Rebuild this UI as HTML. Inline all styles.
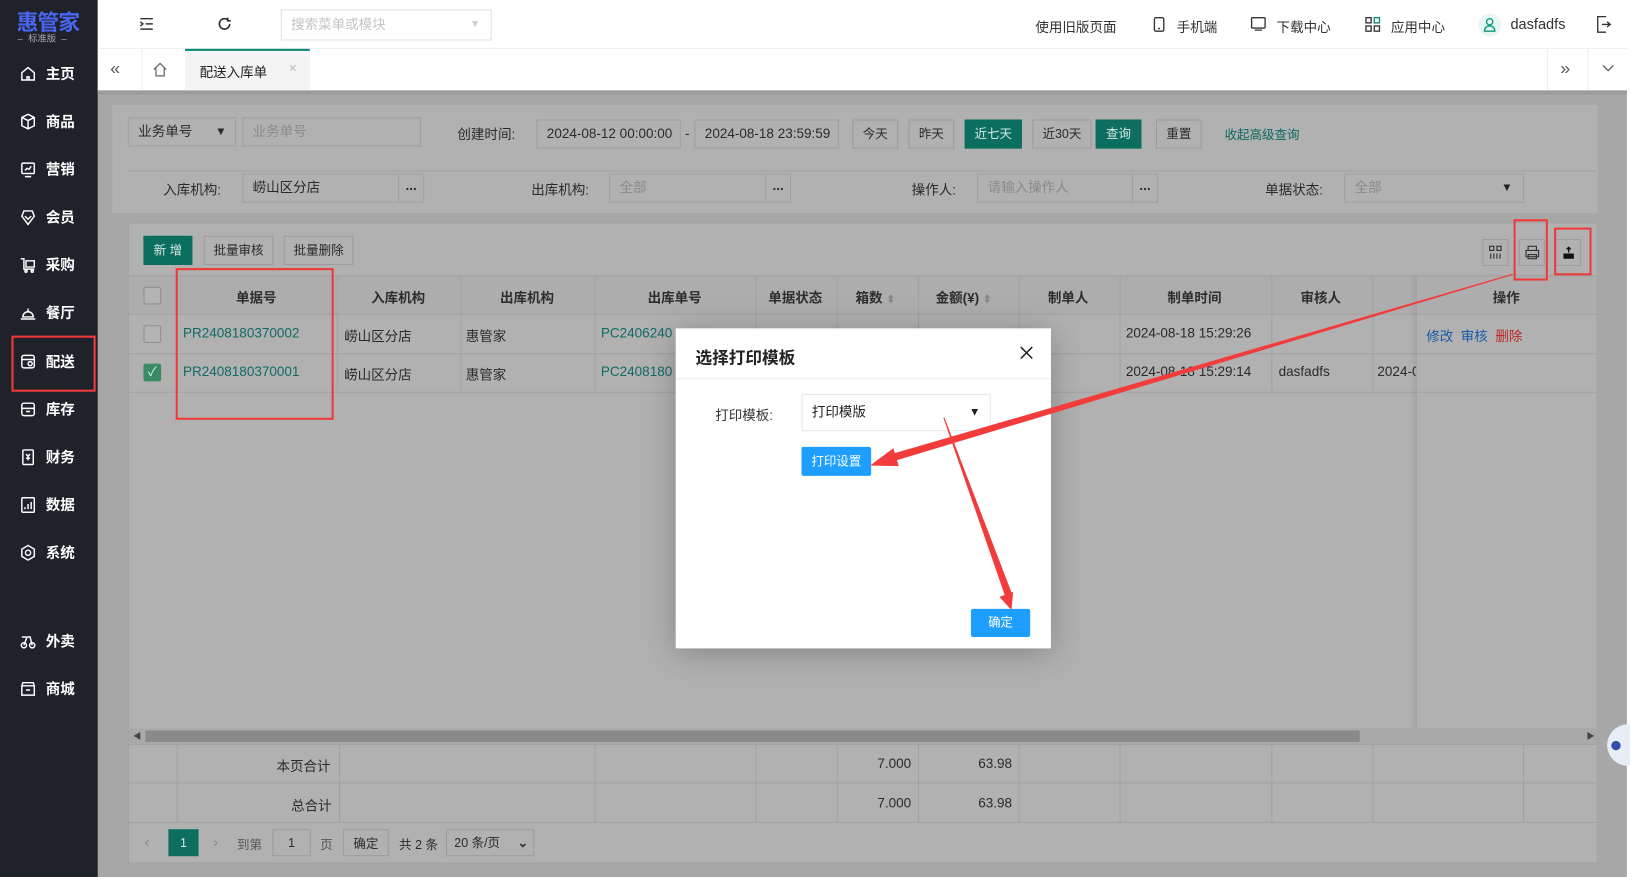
<!DOCTYPE html>
<html><head><meta charset="utf-8">
<style>
*{box-sizing:border-box;margin:0;padding:0}
body{width:1630px;height:877px;overflow:hidden;background:#a7a7a7;font-family:"Liberation Sans","Noto Sans CJK SC",sans-serif;font-size:13px;color:#2a2a2a}
#w{position:absolute;left:0;top:0;width:1568px;height:844px;transform:scale(1.03954,1.0391);transform-origin:0 0;background:#a7a7a7;overflow:hidden}
.a{position:absolute}
.side{left:0;top:0;width:94px;height:844px;background:#1f222b}
.mi{position:absolute;left:0;width:94px;height:30px;color:#fff;font-size:14px;font-weight:bold;line-height:30px}
.mi span{position:absolute;left:44px}
.mi svg{position:absolute;left:19px;top:7px}
.hdr{left:94px;top:0;width:1474px;height:47px;background:#fff;border-bottom:1px solid #eee}
.tabs{left:94px;top:47px;width:1474px;height:40px;background:#fff}
.box{position:absolute;border:1px solid #a0a0a0;background:#b1b1b1;height:28px;line-height:26px;padding-left:9px;color:#2a2a2a}
.ph{color:#8a8a8a}
.btn{position:absolute;border:1px solid #9c9c9c;background:#b1b1b1;height:28px;line-height:26px;text-align:center;font-size:12px;color:#2a2a2a}
.g{background:#0b6e5f;border-color:#0b6e5f;color:#d8e8e4}
.dots{position:absolute;top:0;right:0;width:24px;height:26px;border-left:1px solid #a0a0a0;text-align:center;font-weight:bold;line-height:22px}
.vl{position:absolute;width:1px;background:#a2a2a2}
.hl{position:absolute;height:1px;background:#a2a2a2}
.th{position:absolute;top:276px;font-weight:bold;color:#2e2e2e}
.td{position:absolute;color:#2a2a2a}
.gr{color:#0f6b5e}
.red{position:absolute;border:2px solid #f03a3a}
.cb{position:absolute;width:17px;height:17px;border:1px solid #8f8f8f;background:#b4b4b4;border-radius:2px}
</style></head><body><div id="w">

<div class="a side">
 <div class="a" style="left:16px;top:6px;color:#4966f0;font-size:21px;font-weight:bold;letter-spacing:-1px">惠管家</div>
 <div class="a" style="left:17px;top:30px;color:#aaa;font-size:9px">–&nbsp; 标准版 &nbsp;–</div>
 <div class="mi" style="top:56px"><svg width="16" height="16" viewBox="0 0 16 16" fill="none" stroke="#fff" stroke-width="1.4"><path d="M2 7L8 2l6 5v7H2z"/><path d="M7 14v-3h2v3"/></svg><span>主页</span></div>
 <div class="mi" style="top:102px"><svg width="16" height="16" viewBox="0 0 16 16" fill="none" stroke="#fff" stroke-width="1.4"><path d="M8 1l6 3v8l-6 3-6-3V4z M2 4l6 3 6-3 M8 7v8"/></svg><span>商品</span></div>
 <div class="mi" style="top:148px"><svg width="16" height="16" viewBox="0 0 16 16" fill="none" stroke="#fff" stroke-width="1.4"><rect x="2" y="2" width="12" height="10" rx="1"/><path d="M5 9l2-2 2 1 2-3 M5 15h6"/></svg><span>营销</span></div>
 <div class="mi" style="top:194px"><svg width="16" height="16" viewBox="0 0 16 16" fill="none" stroke="#fff" stroke-width="1.4"><path d="M8 15L2 7l2-5h8l2 5z M5 7l3 3 3-3"/></svg><span>会员</span></div>
 <div class="mi" style="top:240px"><svg width="16" height="16" viewBox="0 0 16 16" fill="none" stroke="#fff" stroke-width="1.4"><path d="M1 2h3v10h10 M6 4h8v6H6z"/><circle cx="6" cy="14" r="1"/><circle cx="12" cy="14" r="1"/></svg><span>采购</span></div>
 <div class="mi" style="top:286px"><svg width="16" height="16" viewBox="0 0 16 16" fill="none" stroke="#fff" stroke-width="1.4"><path d="M3 12a5 5 0 0110 0z M8 4v3 M1 14h14"/></svg><span>餐厅</span></div>
 <div class="mi" style="top:333px"><svg width="16" height="16" viewBox="0 0 16 16" fill="none" stroke="#fff" stroke-width="1.4"><rect x="2" y="2" width="12" height="12" rx="2"/><path d="M2 6h12"/><circle cx="10" cy="10" r="2"/></svg><span>配送</span></div>
 <div class="mi" style="top:379px"><svg width="16" height="16" viewBox="0 0 16 16" fill="none" stroke="#fff" stroke-width="1.4"><rect x="2" y="2" width="12" height="12" rx="2"/><path d="M2 7h12 M6 10h4"/></svg><span>库存</span></div>
 <div class="mi" style="top:425px"><svg width="16" height="16" viewBox="0 0 16 16" fill="none" stroke="#fff" stroke-width="1.4"><rect x="3" y="1" width="10" height="14" rx="1"/><path d="M6 5l2 2 2-2 M8 7v4 M6 9h4"/></svg><span>财务</span></div>
 <div class="mi" style="top:471px"><svg width="16" height="16" viewBox="0 0 16 16" fill="none" stroke="#fff" stroke-width="1.4"><rect x="2" y="1" width="12" height="14" rx="1"/><path d="M5 12v-2 M8 12V7 M11 12V5"/></svg><span>数据</span></div>
 <div class="mi" style="top:517px"><svg width="16" height="16" viewBox="0 0 16 16" fill="none" stroke="#fff" stroke-width="1.4"><path d="M8 1l6 3.5v7L8 15l-6-3.5v-7z"/><circle cx="8" cy="8" r="2.5"/></svg><span>系统</span></div>
 <div class="mi" style="top:602px"><svg width="16" height="16" viewBox="0 0 16 16" fill="none" stroke="#fff" stroke-width="1.4"><circle cx="4" cy="12" r="2.5"/><circle cx="12" cy="12" r="2.5"/><path d="M4 12l3-8h3l2 8 M2 4h4"/></svg><span>外卖</span></div>
 <div class="mi" style="top:648px"><svg width="16" height="16" viewBox="0 0 16 16" fill="none" stroke="#fff" stroke-width="1.4"><path d="M2 5l1-3h10l1 3v9H2z M2 5h12 M6 9h4"/></svg><span>商城</span></div>
 <div class="red" style="left:11px;top:323px;width:81px;height:54px"></div>
</div>

<div class="a hdr">
 <svg class="a" style="left:40px;top:16px" width="14" height="14" viewBox="0 0 14 14" fill="none" stroke="#333" stroke-width="1.4"><path d="M1 2h12 M6 7h7 M1 12h12 M1 5l2.5 2L1 9"/></svg>
 <svg class="a" style="left:115px;top:16px" width="14" height="14" viewBox="0 0 14 14" fill="none" stroke="#333" stroke-width="1.6"><path d="M12 7a5 5 0 1 1-2-4 M10 1v3h3"/></svg>
 <div class="a" style="left:176px;top:9px;width:203px;height:30px;border:1px solid #e2e2e2;color:#c4c4c4;line-height:28px;padding-left:9px">搜索菜单或模块<span class="a" style="right:10px;top:0;color:#ccc;font-size:10px">▼</span></div>
 <div class="a" style="left:902px;top:16px;color:#333;font-size:13px">使用旧版页面</div>
 <svg class="a" style="left:1015px;top:16px" width="12" height="15" viewBox="0 0 12 15" fill="none" stroke="#333" stroke-width="1.3"><rect x="1.5" y="1" width="9" height="13" rx="1.5"/><path d="M5 11.5h2"/></svg>
 <div class="a" style="left:1038px;top:16px;color:#333">手机端</div>
 <svg class="a" style="left:1109px;top:16px" width="15" height="14" viewBox="0 0 15 14" fill="none" stroke="#333" stroke-width="1.3"><rect x="1" y="1" width="13" height="10" rx="1"/><path d="M4 13h7"/></svg>
 <div class="a" style="left:1134px;top:16px;color:#333">下载中心</div>
 <svg class="a" style="left:1219px;top:16px" width="15" height="15" viewBox="0 0 15 15" fill="none" stroke="#333" stroke-width="1.3"><rect x="1" y="1" width="5" height="5"/><rect x="9" y="1" width="5" height="5" stroke="#0b8a74"/><rect x="1" y="9" width="5" height="5"/><rect x="9" y="9" width="5" height="5"/></svg>
 <div class="a" style="left:1244px;top:16px;color:#333">应用中心</div>
 <div class="a" style="left:1328px;top:13px;width:22px;height:22px;border-radius:11px;background:#e8f6f3"></div>
 <svg class="a" style="left:1333px;top:17px" width="12" height="14" viewBox="0 0 12 14" fill="none" stroke="#0b9a80" stroke-width="1.3"><circle cx="6" cy="4" r="3"/><path d="M1 13c0-3 2-5 5-5s5 2 5 5z"/></svg>
 <div class="a" style="left:1359px;top:15px;color:#333;font-size:14px">dasfadfs</div>
 <svg class="a" style="left:1442px;top:15px" width="14" height="17" viewBox="0 0 14 17" fill="none" stroke="#333" stroke-width="1.3"><path d="M9 1H1v15h8 M5 8.5h8 M10 6l3 2.5-3 2.5"/></svg>
</div>

<div class="a tabs">
 <div class="a" style="left:12px;top:9px;font-size:17px;color:#555">«</div>
 <div class="a" style="left:42px;top:0;width:1px;height:40px;background:#eee"></div>
 <svg class="a" style="left:52px;top:12px" width="16" height="16" viewBox="0 0 16 16" fill="none" stroke="#666" stroke-width="1.2"><path d="M2 8L8 2l6 6 M4 6v8h8V6"/></svg>
 <div class="a" style="left:84px;top:0;width:120px;height:40px;background:#f4f4f4;border-top:2px solid #0b8a74"></div>
 <div class="a" style="left:98px;top:12px;color:#222;font-size:13px">配送入库单</div>
 <div class="a" style="left:184px;top:11px;color:#bbb;font-size:13px">×</div>
 <div class="a" style="left:1394px;top:0;width:1px;height:40px;background:#eee"></div>
 <div class="a" style="left:1407px;top:9px;font-size:17px;color:#555">»</div>
 <div class="a" style="left:1433px;top:0;width:1px;height:40px;background:#eee"></div>
 <svg class="a" style="left:1447px;top:15px" width="12" height="8" viewBox="0 0 12 8" fill="none" stroke="#555" stroke-width="1.2"><path d="M1 1l5 5 5-5"/></svg>
</div>
<div class="a" style="left:1565px;top:0;width:3px;height:844px;background:#fff"></div>
<div class="a" style="left:94px;top:87px;width:1471px;height:4px;background:#9c9c9c"></div>

<div class="a" style="left:108px;top:101px;width:1429px;height:104px;background:#b1b1b1"></div>
<div class="box" style="left:123px;top:113px;width:104px">业务单号<span class="a" style="right:8px;top:0;font-size:11px">▼</span></div>
<div class="box ph" style="left:233px;top:113px;width:172px">业务单号</div>
<div class="a" style="left:440px;top:119px">创建时间:</div>
<div class="box" style="left:516px;top:115px;width:139px">2024-08-12 00:00:00</div>
<div class="a" style="left:659px;top:121px">-</div>
<div class="box" style="left:668px;top:115px;width:139px">2024-08-18 23:59:59</div>
<div class="btn" style="left:820px;top:115px;width:44px">今天</div>
<div class="btn" style="left:874px;top:115px;width:44px">昨天</div>
<div class="btn g" style="left:928px;top:115px;width:55px">近七天</div>
<div class="btn" style="left:993px;top:115px;width:57px">近30天</div>
<div class="btn g" style="left:1054px;top:115px;width:44px">查询</div>
<div class="btn" style="left:1112px;top:115px;width:44px">重置</div>
<div class="a" style="left:1178px;top:121px;color:#0d6a5c;font-size:12px">收起高级查询</div>
<div class="hl" style="left:123px;top:164px;width:1412px"></div>
<div class="a" style="left:157px;top:172px">入库机构:</div>
<div class="box" style="left:233px;top:167px;width:175px">崂山区分店<div class="dots">...</div></div>
<div class="a" style="left:511px;top:172px">出库机构:</div>
<div class="box ph" style="left:586px;top:167px;width:175px">全部<div class="dots" style="color:#2a2a2a">...</div></div>
<div class="a" style="left:877px;top:172px">操作人:</div>
<div class="box ph" style="left:940px;top:167px;width:174px">请输入操作人<div class="dots" style="color:#2a2a2a">...</div></div>
<div class="a" style="left:1217px;top:172px">单据状态:</div>
<div class="box ph" style="left:1293px;top:167px;width:173px">全部<span class="a" style="right:10px;top:0;font-size:11px;color:#222">▼</span></div>

<div class="a" style="left:123px;top:214px;width:1414px;height:617px;background:#b1b1b1;border:1px solid #a3a3a3"></div>
<div class="btn g" style="left:138px;top:227px;width:47px">新 增</div>
<div class="btn" style="left:196px;top:227px;width:67px">批量审核</div>
<div class="btn" style="left:273px;top:227px;width:67px">批量删除</div>
<div class="btn" style="left:1426px;top:230px;width:25px;height:26px"><svg style="margin-top:5px" width="13" height="14" viewBox="0 0 13 14" fill="none" stroke="#333" stroke-width="1.1"><rect x="1" y="1" width="4" height="4"/><rect x="8" y="1" width="4" height="4"/><path d="M2 8v5 M5 8v5 M8 8v5 M11 8v5"/></svg></div>
<div class="btn" style="left:1461px;top:230px;width:25px;height:26px"><svg style="margin-top:5px" width="14" height="14" viewBox="0 0 14 14" fill="none" stroke="#333" stroke-width="1.1"><path d="M3 5V1h8v4 M1 5h12v6H1z M3 9h8v4H3z"/></svg></div>
<div class="btn" style="left:1496px;top:230px;width:25px;height:26px"><svg style="margin-top:5px" width="14" height="14" viewBox="0 0 14 14"><path d="M2 8h10v5H2z" fill="#111"/><path d="M7 7V2 M5 4l2-2 2 2" stroke="#111" stroke-width="1.3" fill="none"/></svg></div>

<div class="a" style="left:124px;top:265px;width:1412px;height:37px;background:#adadad"></div>
<div class="hl" style="left:124px;top:265px;width:1412px"></div>
<div class="hl" style="left:124px;top:302px;width:1412px"></div>
<div class="hl" style="left:124px;top:340px;width:1412px"></div>
<div class="hl" style="left:124px;top:377px;width:1412px"></div>
<div class="vl" style="left:170px;top:265px;height:112px"></div>
<div class="vl" style="left:324px;top:265px;height:112px"></div>
<div class="vl" style="left:443px;top:265px;height:112px"></div>
<div class="vl" style="left:572px;top:265px;height:112px"></div>
<div class="vl" style="left:727px;top:265px;height:112px"></div>
<div class="vl" style="left:805px;top:265px;height:112px"></div>
<div class="vl" style="left:883px;top:265px;height:112px"></div>
<div class="vl" style="left:980px;top:265px;height:112px"></div>
<div class="vl" style="left:1077px;top:265px;height:112px"></div>
<div class="vl" style="left:1223px;top:265px;height:112px"></div>
<div class="vl" style="left:1320px;top:265px;height:112px"></div>
<div class="a" style="left:1362px;top:265px;width:174px;height:436px;border-left:1px solid #a2a2a2;box-shadow:-3px 0 5px rgba(0,0,0,.06)"></div>
<div class="cb" style="left:138px;top:276px"></div>
<div class="th" style="left:227px">单据号</div>
<div class="th" style="left:357px">入库机构</div>
<div class="th" style="left:481px">出库机构</div>
<div class="th" style="left:623px">出库单号</div>
<div class="th" style="left:739px">单据状态</div>
<div class="th" style="left:823px">箱数 <span style="color:#888;font-size:10px">⬍</span></div>
<div class="th" style="left:900px">金额(¥) <span style="color:#888;font-size:10px">⬍</span></div>
<div class="th" style="left:1008px">制单人</div>
<div class="th" style="left:1123px">制单时间</div>
<div class="th" style="left:1251px">审核人</div>
<div class="th" style="left:1436px">操作</div>
<div class="cb" style="left:138px;top:313px"></div>
<div class="td gr" style="left:176px;top:313px">PR2408180370002</div>
<div class="td" style="left:331px;top:313px">崂山区分店</div>
<div class="td" style="left:448px;top:313px">惠管家</div>
<div class="td gr" style="left:578px;top:313px">PC2406240</div>
<div class="td" style="left:1083px;top:313px">2024-08-18 15:29:26</div>
<div class="td" style="left:1372px;top:313px;color:#1c5aa8">修改 &nbsp;<span>审核</span> &nbsp;<span style="color:#c02828">删除</span></div>
<div class="cb" style="left:138px;top:350px;background:#3c8a63;border-color:#3c8a63;color:#cfe;font-size:12px;line-height:15px;text-align:center">✓</div>
<div class="td gr" style="left:176px;top:350px">PR2408180370001</div>
<div class="td" style="left:331px;top:350px">崂山区分店</div>
<div class="td" style="left:448px;top:350px">惠管家</div>
<div class="td gr" style="left:578px;top:350px">PC2408180</div>
<div class="td" style="left:1083px;top:350px">2024-08-18 15:29:14</div>
<div class="td" style="left:1230px;top:350px">dasfadfs</div>
<div class="td" style="left:1325px;top:350px;width:37px;overflow:hidden;white-space:nowrap">2024-08</div>

<div class="a" style="left:124px;top:701px;width:1412px;height:15px;background:#a9a9a9"></div>
<div class="a" style="left:140px;top:703px;width:1168px;height:11px;background:#8a8a8a"></div>
<div class="a" style="left:128px;top:703px;font-size:8px;color:#444">◀</div>
<div class="a" style="left:1526px;top:703px;font-size:8px;color:#444">▶</div>
<div class="hl" style="left:124px;top:716px;width:1412px"></div>
<div class="hl" style="left:124px;top:753px;width:1412px"></div>
<div class="hl" style="left:124px;top:791px;width:1412px"></div>
<div class="vl" style="left:170px;top:716px;height:75px"></div>
<div class="vl" style="left:326px;top:716px;height:75px"></div>
<div class="vl" style="left:572px;top:716px;height:75px"></div>
<div class="vl" style="left:727px;top:716px;height:75px"></div>
<div class="vl" style="left:805px;top:716px;height:75px"></div>
<div class="vl" style="left:883px;top:716px;height:75px"></div>
<div class="vl" style="left:980px;top:716px;height:75px"></div>
<div class="vl" style="left:1077px;top:716px;height:75px"></div>
<div class="vl" style="left:1223px;top:716px;height:75px"></div>
<div class="vl" style="left:1320px;top:716px;height:75px"></div>
<div class="vl" style="left:1465px;top:716px;height:75px"></div>
<div class="td" style="left:266px;top:727px">本页合计</div>
<div class="td" style="left:280px;top:765px">总合计</div>
<div class="td" style="left:844px;top:727px">7.000</div>
<div class="td" style="left:941px;top:727px">63.98</div>
<div class="td" style="left:844px;top:765px">7.000</div>
<div class="td" style="left:941px;top:765px">63.98</div>
<div class="a" style="left:139px;top:802px;color:#888;font-size:14px">‹</div>
<div class="a" style="left:162px;top:798px;width:29px;height:26px;background:#0b6e5f;color:#dde;text-align:center;line-height:26px;font-size:12px">1</div>
<div class="a" style="left:205px;top:802px;color:#888;font-size:14px">›</div>
<div class="a" style="left:228px;top:804px;font-size:12px;color:#555">到第</div>
<div class="btn" style="left:262px;top:798px;width:37px;height:26px;line-height:24px">1</div>
<div class="a" style="left:308px;top:804px;font-size:12px;color:#555">页</div>
<div class="btn" style="left:330px;top:798px;width:44px;height:26px;line-height:26px">确定</div>
<div class="a" style="left:384px;top:804px;font-size:12px">共 2 条</div>
<div class="btn" style="left:429px;top:798px;width:85px;height:26px;line-height:24px;text-align:left;padding-left:7px">20 条/页 <span class="a" style="right:5px;top:0;font-weight:bold">⌄</span></div>

<div class="red" style="left:169px;top:258px;width:152px;height:146px"></div>
<div class="red" style="left:1456px;top:211px;width:33px;height:59px"></div>
<div class="red" style="left:1495px;top:219px;width:36px;height:46px"></div>

<div class="a" style="left:650px;top:316px;width:361px;height:308px;background:#fff;box-shadow:0 4px 30px rgba(0,0,0,.25)">
 <div class="a" style="left:19px;top:15px;font-size:16px;font-weight:bold;color:#222">选择打印模板</div>
 <svg class="a" style="left:331px;top:17px" width="13" height="13" viewBox="0 0 13 13" stroke="#222" stroke-width="1.5"><path d="M1 1l11 11 M12 1L1 12"/></svg>
 <div class="a" style="left:0;top:48px;width:361px;height:1px;background:#eee"></div>
 <div class="a" style="left:38px;top:73px;color:#333">打印模板:</div>
 <div class="a" style="left:121px;top:63px;width:182px;height:36px;border:1px solid #e6e6e6;line-height:34px;padding-left:9px;color:#222">打印模版<span class="a" style="right:9px;top:0;font-size:11px">▼</span></div>
 <div class="a" style="left:121px;top:114px;width:67px;height:28px;background:#1e9fff;color:#fff;text-align:center;line-height:28px;font-size:12px;border-radius:2px">打印设置</div>
 <div class="a" style="left:284px;top:270px;width:57px;height:27px;background:#1e9fff;color:#fff;text-align:center;line-height:27px;font-size:12px;border-radius:2px">确定</div>
</div>

<svg class="a" style="left:0;top:0" width="1568" height="844">
 <polygon points="1455.1,264.5 1454.9,263.5 859,436.6 861,443.4" fill="#f23c3c"/>
 <polygon points="837,448 864.6,448.6 859.4,431.4" fill="#f23c3c"/>
 <polygon points="908.5,401.8 907.5,402.2 966.7,573.2 973.3,570.8" fill="#f23c3c"/>
 <polygon points="973,587 974.6,569.6 961.4,574.4" fill="#f23c3c"/>
</svg>
<div class="a" style="left:1546px;top:697px;width:22px;height:40px;border-radius:20px 0 0 20px;background:#e8eef8"></div>
<div class="a" style="left:1550px;top:713px;width:9px;height:9px;border-radius:5px;background:#3050b0"></div>
</div></body></html>
